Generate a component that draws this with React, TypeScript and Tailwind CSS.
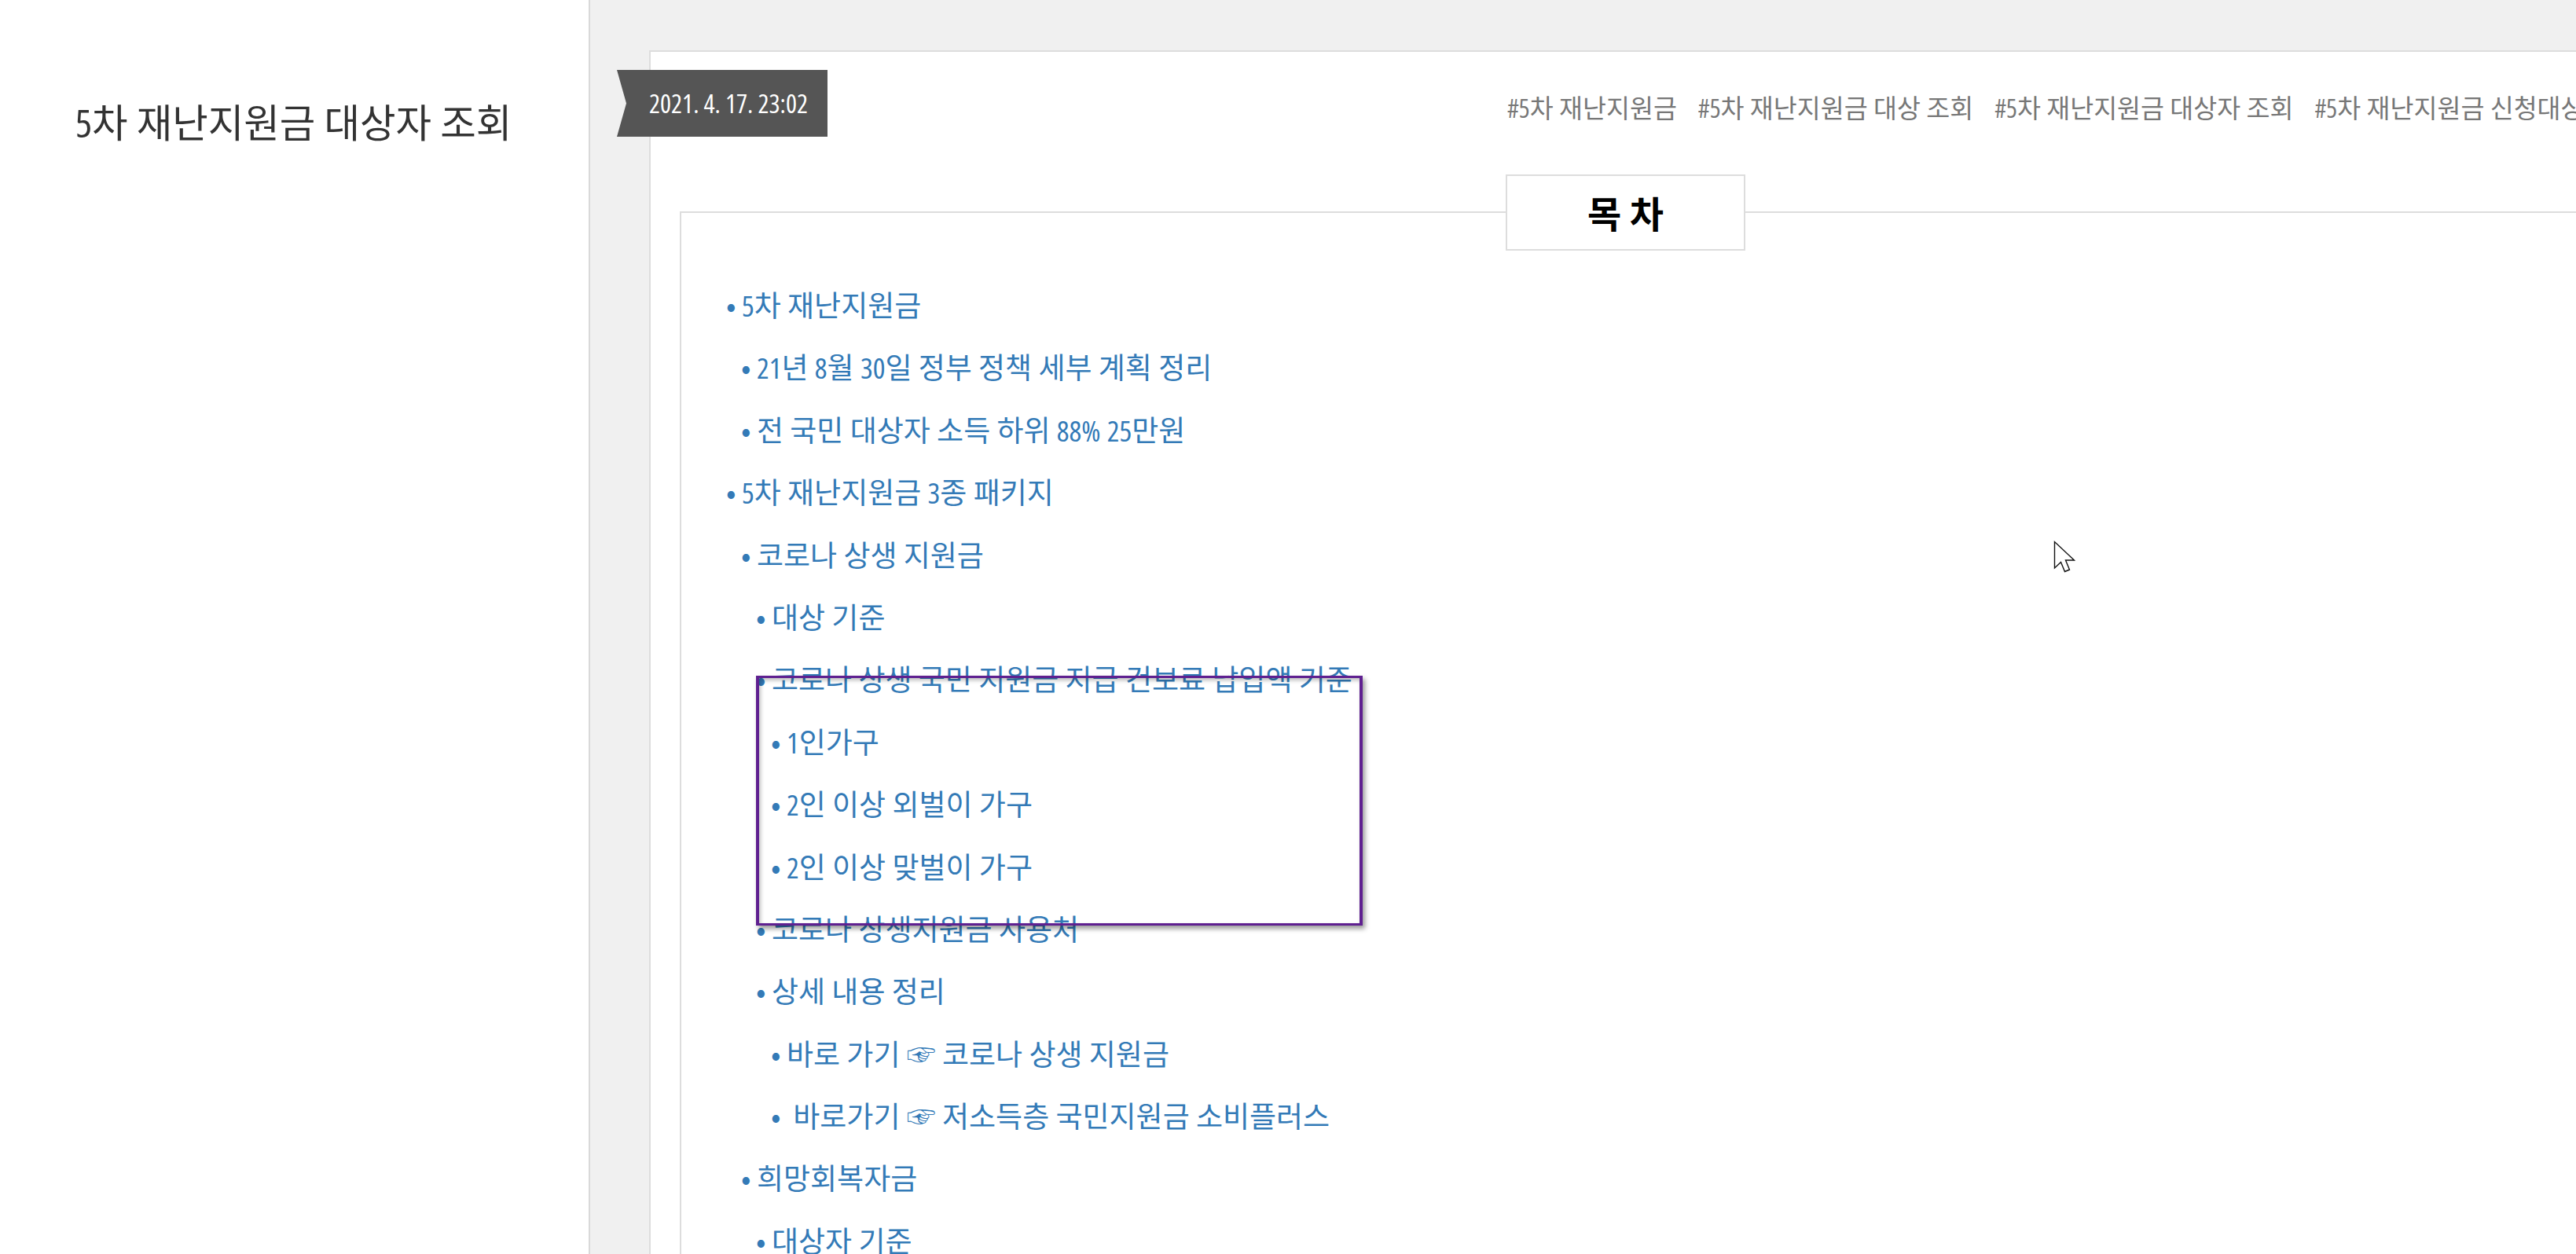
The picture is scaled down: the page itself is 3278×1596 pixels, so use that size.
const font = "font-['Noto_Sans_CJK_KR','Noto_Sans',sans-serif]";

const tags = ["#5차 재난지원금", "#5차 재난지원금 대상 조회", "#5차 재난지원금 대상자 조회", "#5차 재난지원금 신청대상자 조회"];

const toc: { level: number; text: string }[] = [
  { level: 0, text: "5차 재난지원금" },
  { level: 1, text: "21년 8월 30일 정부 정책 세부 계획 정리" },
  { level: 1, text: "전 국민 대상자 소득 하위 88% 25만원" },
  { level: 0, text: "5차 재난지원금 3종 패키지" },
  { level: 1, text: "코로나 상생 지원금" },
  { level: 2, text: "대상 기준" },
  { level: 2, text: "코로나 상생 국민 지원금 지급 건보료 납입액 기준" },
  { level: 3, text: "1인가구" },
  { level: 3, text: "2인 이상 외벌이 가구" },
  { level: 3, text: "2인 이상 맞벌이 가구" },
  { level: 2, text: "코로나 상생지원금 사용처" },
  { level: 2, text: "상세 내용 정리" },
  { level: 3, text: "바로 가기 ☞ 코로나 상생 지원금" },
  { level: 3, text: "\u00a0바로가기 ☞ 저소득층 국민지원금 소비플러스" },
  { level: 1, text: "희망회복자금" },
  { level: 2, text: "대상자 기준" },
];

const indent = ["pl-0", "pl-[19px]", "pl-[38px]", "pl-[57px]"];

// digits in the original are a condensed latin face, hangul stays as is
function Mixed({ text }: { text: string }) {
  const parts = text.split(/([#0-9%]+)/);
  return (
    <>
      {parts.map((p, i) =>
        i % 2 === 1 ? (
          <span key={i} className="font-['Open_Sans',sans-serif] [font-stretch:75%]">
            {p}
          </span>
        ) : (
          p
        )
      )}
    </>
  );
}

export default function App() {
  return (
    <div className={`relative flex h-[1596px] w-[3278px] overflow-hidden bg-white ${font}`}>
      {/* left sidebar */}
      <aside className="h-full w-[751px] shrink-0 border-r-2 border-[#d9d9d9] bg-white pl-[96px] pt-[122px]">
        <h1 className="text-[49.5px] leading-[64px] font-normal text-[#333333]">
          <Mixed text="5차 재난지원금 대상자 조회" />
        </h1>
      </aside>

      <main className="h-full flex-1 bg-[#f0f0f0] pl-[75px] pt-[64px]">
        <div className="relative h-[1700px] w-[2800px] border-2 border-[#dddddd] bg-white pl-[37px]">
          {/* date ribbon */}
          <div className="absolute left-[-43px] top-[23px] flex h-[85px] w-[268px] items-center bg-[#555555] pl-[41px] font-['Open_Sans',sans-serif] text-[33px] font-medium text-white [font-stretch:75%] [clip-path:polygon(0_0,100%_0,100%_100%,0_100%,12px_50%)]">
            2021. 4. 17. 23:02
          </div>

          <div className="mt-[48px] flex h-[44px] gap-[27px] pl-[1053px] text-[32.6px] leading-[44px] whitespace-nowrap text-[#777777]">
            {tags.map((t) => (
              <span key={t}>
                <Mixed text={t} />
              </span>
            ))}
          </div>

          {/* table of contents */}
          <section className="relative mt-[111px] h-[1500px] w-[2700px] border-2 border-[#dddddd] pl-[57px] pt-[77px]">
            <div className="absolute left-[1049px] top-[-49px] flex h-[97px] w-[305px] items-center justify-center border-2 border-[#dddddd] bg-white text-[47px] font-bold text-black">
              목 차
            </div>
            <ul className="text-[37px] leading-[79.4px] text-[#337ab7]">
              {toc.map((item, i) => (
                <li key={i} className={`flex h-[79.4px] ${indent[item.level]}`}>
                  <span className="w-[20px] shrink-0">•</span>
                  <span className="whitespace-pre">
                    <Mixed text={item.text} />
                  </span>
                </li>
              ))}
            </ul>
          </section>
        </div>
      </main>

      {/* purple highlight drawn over the list */}
      <div className="absolute left-[962px] top-[860px] h-[318px] w-[772px] border-x-4 border-y-[3px] border-[#5f2090] shadow-[3px_4px_6px_rgba(0,0,0,0.4),inset_2px_3px_5px_rgba(0,0,0,0.25)]" />

      {/* mouse cursor */}
      <svg className="absolute left-[2610px] top-[686px]" width="34" height="46" viewBox="0 0 34 46">
        <path d="M4.5 3.5 V37 L12.5 29.5 L17.5 41.5 L23.5 39 L18.5 27 L29.5 27 Z" fill="#fff" stroke="#111" strokeWidth="1.4" />
      </svg>
    </div>
  );
}
